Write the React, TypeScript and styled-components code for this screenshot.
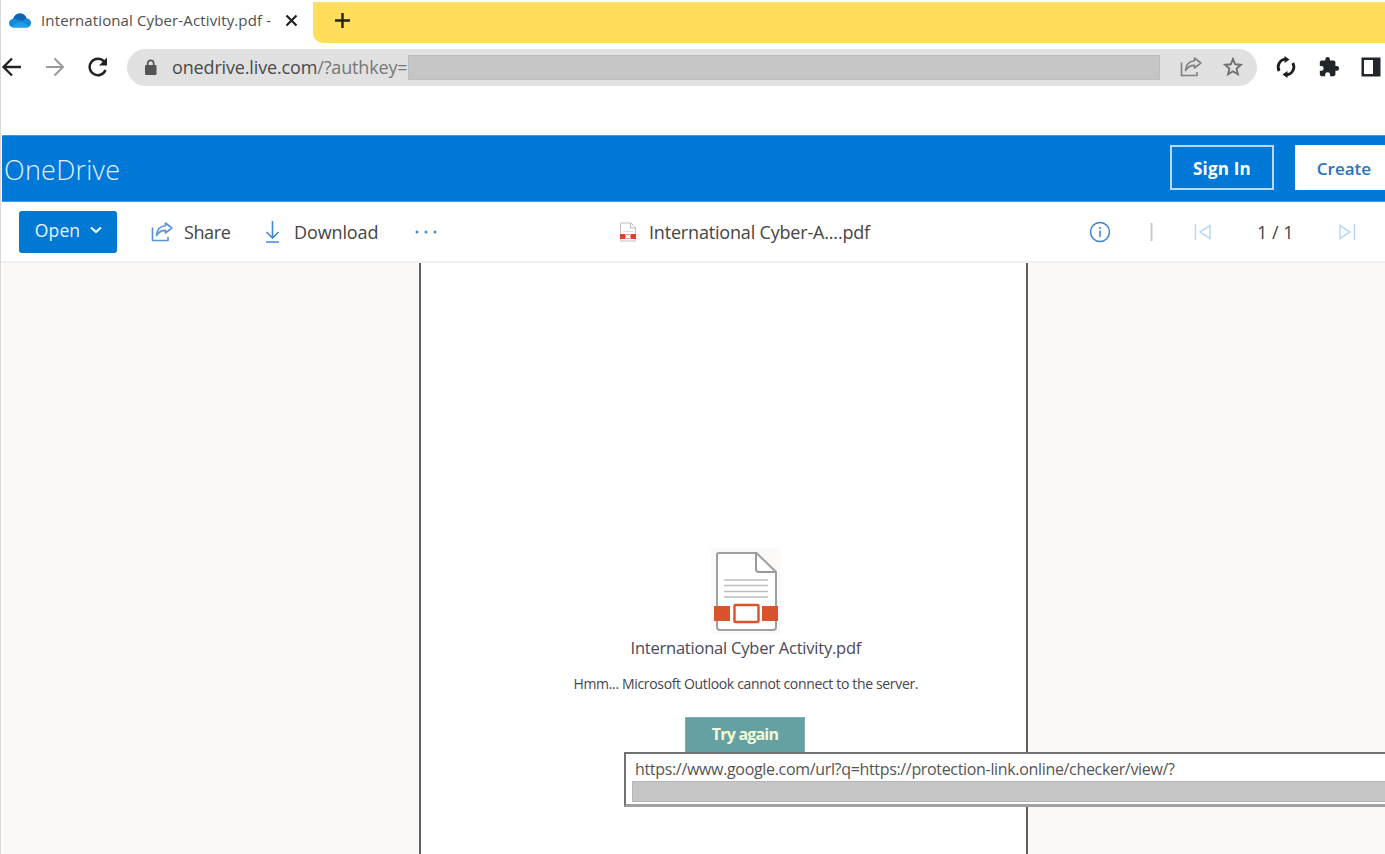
import React from "react";
import styled, { createGlobalStyle } from "styled-components";

const Global = createGlobalStyle`
  * { box-sizing: border-box; }
  html, body { margin: 0; padding: 0; overflow: hidden; }
  body { font-family: "Open Sans", "Noto Sans", sans-serif; background: #fff; }
  svg { display: block; flex: none; }
  button { font-family: inherit; margin: 0; padding: 0; cursor: pointer; }
`;

const Window = styled.div`
  width: 1385px;
  height: 854px;
  display: flex;
  flex-direction: column;
  overflow: hidden;
  background: #fff;
  border-left: 1px solid #d9d9d9;
`;

const Label = styled.span<{ $w: number; $size: number; $track?: number; $color?: string; $weight?: number }>`
  flex: none;
  width: ${(p) => p.$w}px;
  font-size: ${(p) => p.$size}px;
  letter-spacing: ${(p) => p.$track ?? 0}px;
  color: ${(p) => p.$color ?? "#444"};
  font-weight: ${(p) => p.$weight ?? 400};
  line-height: 24px;
  white-space: nowrap;
`;

const TabStrip = styled.div`
  display: flex;
  height: 43px;
  flex: none;
  padding-top: 2px;
`;

const Tab = styled.div`
  width: 312px;
  height: 41px;
  display: flex;
  align-items: center;
  padding: 0 0 5px 8px;
`;

const TabTitle = styled(Label)`
  margin-left: 10px;
`;

const TabClose = styled.div`
  margin-left: 13px;
`;

const StripRest = styled.div`
  flex: 1;
  height: 41px;
  background: #ffde5c;
  border-bottom-left-radius: 10px;
  border-top: 1px solid #ffe37a;
  display: flex;
  align-items: center;
  padding: 0 0 5px 21px;
`;

const NavBar = styled.div`
  display: flex;
  align-items: center;
  height: 48px;
  flex: none;
`;

const NavButtons = styled.div`
  display: flex;
  align-items: center;
  width: 126px;
  gap: 22px;
`;

const AddressBar = styled.div`
  width: 1130px;
  height: 37px;
  border-radius: 19px;
  background: #e1e1e1;
  display: flex;
  align-items: center;
  padding-left: 17px;
`;

const UrlText = styled(Label)`
  margin-left: 15px;
  span { color: #777; }
`;

const UrlMask = styled.div`
  width: 752px;
  height: 25px;
  background: #c6c6c6;
  border: 1px solid #bdbdbd;
`;

const AddressIcons = styled.div`
  display: flex;
  align-items: center;
  gap: 21px;
  margin-left: 20px;
`;

const Extensions = styled.div`
  display: flex;
  align-items: center;
  gap: 21px;
  margin-left: 18px;
`;

const Header = styled.header`
  margin: 44px 0 0 1px;
  height: 67px;
  flex: none;
  background: #0078d7;
  border-top: 1px solid #4798df;
  border-bottom: 1px solid #4798df;
  display: flex;
  align-items: center;
  padding: 0 0 2px 2px;
`;

const Brand = styled(Label)`
  line-height: 36px;
  padding-top: 4px;
`;

const HeaderActions = styled.div`
  display: flex;
  gap: 21px;
  margin-left: auto;
  margin-right: -21px;
`;

const HeaderButton = styled.button<{ $solid?: boolean }>`
  width: ${(p) => (p.$solid ? 111 : 104)}px;
  height: 45px;
  display: flex;
  align-items: center;
  padding: 2px 0 0 ${(p) => (p.$solid ? 19 : 20)}px;
  border: 2px solid ${(p) => (p.$solid ? "#fff" : "#b9daf5")};
  background: ${(p) => (p.$solid ? "#fff" : "transparent")};
`;

const CommandBar = styled.div`
  height: 61px;
  flex: none;
  display: flex;
  align-items: center;
  padding-left: 18px;
  border-bottom: 2px solid #f1f0ef;
`;

const OpenButton = styled.button`
  width: 98px;
  height: 42px;
  border: 0;
  border-radius: 3px;
  background: #0078d4;
  display: flex;
  align-items: center;
  gap: 9px;
  padding: 0 0 3px 15px;
`;

const Command = styled.div<{ $left: number; $gap: number }>`
  display: flex;
  align-items: center;
  margin-left: ${(p) => p.$left}px;
  gap: ${(p) => p.$gap}px;
`;

const Viewer = styled.main`
  flex: 1;
  display: flex;
  margin-left: 1px;
  background: #faf9f8;
  position: relative;
`;

const Page = styled.section`
  margin-left: 417px;
  width: 609px;
  background: #fff;
  border: solid #606060;
  border-width: 0 2px;
  padding: 285px 0 0 45px;
  display: flex;
  flex-direction: column;
  align-items: center;
`;

const IconPlate = styled.div`
  width: 70px;
  height: 86px;
  background: #fbfaf8;
  padding: 4px 0 0 3px;
`;

const FileName = styled(Label)`
  margin-top: 2px;
`;

const Message = styled(Label)`
  margin-top: 12px;
`;

const Retry = styled.button`
  margin: 21px 2px 0 0;
  width: 120px;
  height: 37px;
  border: 1px solid #7fb0ae;
  background: #65a1a3;
  display: flex;
  justify-content: center;
  padding-top: 4px;
`;

const LinkTip = styled.div`
  position: absolute;
  left: 622px;
  top: 489px;
  width: 800px;
  height: 55px;
  background: #fff;
  border: 2px solid #727272;
  border-bottom: 3px solid #a0a0a0;
  padding: 3px 0 0 6px;
  display: flex;
  flex-direction: column;
`;

const TipText = styled(Label)`
  margin-left: 3px;
`;

const TipMask = styled.div`
  height: 21px;
  flex: none;
  background: #c6c6c6;
  border: 1px solid #b5b5b5;
`;

const Cloud = () => (
  <svg width="22" height="15" viewBox="0 0 22 15">
    <path d="M5 14.500C2 14.500 0 12.600 0 10.200 0 7.800 1.800 6 4.200 5.800 5.300 2.400 8 .5 11 .5c3 0 5.500 1.800 6.500 4.800C20.200 5.500 22 7.500 22 10c0 2.600-1.900 4.500-4.500 4.500Z" fill="#1689d8" />
    <path d="M4.200 5.800C5.300 2.400 8 .5 11 .5c3 0 5.500 1.800 6.500 4.800L13 8 7 6Z" fill="#0f66b8" />
    <path d="M2 13.500 12 8.500l8.500 4.500c-.8 1-1.800 1.500-3 1.500H5c-1.200 0-2.200-.4-3-1Z" fill="#1fa0e8" />
  </svg>
);

const ShareIcon = ({ color }: { color: string }) => (
  <svg width="22" height="22" viewBox="0 0 22 22" fill="none" stroke={color} strokeWidth="1.600" strokeLinejoin="round">
    <path d="M1.500 6.500v13h15.500V16" />
    <path d="M14.500 2 20.800 7 14.500 12V9.400C10.500 9.200 7.800 11 5.500 14.500 6 9 9 5.200 14.500 4.800Z" />
  </svg>
);

const SmallPdf = () => (
  <svg width="18" height="20" viewBox="0 0 18 20">
    <path d="M1.500 1h10.500L16.500 5.500V19h-15Z" fill="#fff" stroke="#c2c2c2" />
    <path d="M11.500 1v5h5" fill="none" stroke="#b5b5b5" />
    <path d="M4 9.500h10" stroke="#ddd" />
    <path d="M1 12h5v5H1ZM12 12h5v5h-5Z" fill="#d9442d" />
    <path d="M6.500 12.500h5v4h-5Z" fill="#fff" stroke="#e99b8c" />
  </svg>
);

const LargePdf = () => (
  <svg width="66" height="80" viewBox="0 0 66 80" fill="none">
    <path d="M5 1H42.500L62 20V75q0 3-3 3H6q-3 0-3-3V3q0-2 2-2Z" fill="#fff" stroke="#a0a0a0" strokeWidth="2" />
    <path d="M42 1V17q0 3 3 3H62" stroke="#999" strokeWidth="2" />
    <path d="M10 28H54M10 33.500H54M10 39.500H54M10 45H54" stroke="#bdbdbd" strokeWidth="1.500" />
    <path d="M0 54H16V69H0ZM48 54H64V69H48Z" fill="#d9532c" />
    <rect x="17" y="51" width="30" height="21" fill="#fff" />
    <rect x="20.500" y="53" width="24" height="17" rx="1" fill="#fff" stroke="#d9532c" strokeWidth="2.400" />
  </svg>
);

export default function App() {
  return (
    <>
      <Global />
      <Window>
        <TabStrip>
          <Tab>
            <Cloud />
            <TabTitle $w={231} $size={15} $track={0.13} $color="#505050">International Cyber-Activity.pdf -</TabTitle>
            <TabClose>
              <svg width="13" height="13" viewBox="0 0 13 13" stroke="#222" strokeWidth="2.200"><path d="M1.500 1.500l10 10M11.500 1.500l-10 10" /></svg>
            </TabClose>
          </Tab>
          <StripRest>
            <svg width="17" height="17" viewBox="0 0 17 17" stroke="#26221a" strokeWidth="2.400"><path d="M8.500 1v15M1 8.500h15" /></svg>
          </StripRest>
        </TabStrip>

        <NavBar>
          <NavButtons>
            <svg width="21" height="20" viewBox="0 0 21 20" fill="none" stroke="#222" strokeWidth="2.300"><path d="M20 10H3M11 1.500 2.500 10 11 18.500" /></svg>
            <svg width="21" height="20" viewBox="0 0 21 20" fill="none" stroke="#999" strokeWidth="2"><path d="M2 10h16M10.500 1.500 19 10l-8.500 8.500" /></svg>
            <svg width="22" height="20" viewBox="0 0 22 20" fill="none"><path d="M17 4.500A8.200 8.200 0 1 0 18.500 13" stroke="#222" strokeWidth="2.500" /><path d="M20 .5V8.500H12Z" fill="#222" /></svg>
          </NavButtons>
          <AddressBar>
            <svg width="13" height="17" viewBox="0 0 13 17"><rect x="1" y="6" width="11.500" height="10" rx="1" fill="#555" /><path d="M3.700 7V4.300a3 3 0 0 1 6 0V7" fill="none" stroke="#555" strokeWidth="1.700" /></svg>
            <UrlText $w={236} $size={18} $track={-0.15} $color="#4a4a4a">onedrive.live.com<span>/?authkey=</span></UrlText>
            <UrlMask />
            <AddressIcons>
              <ShareIcon color="#808080" />
              <svg width="20" height="20" viewBox="0 0 20 20" fill="none" stroke="#707070" strokeWidth="1.900"><path d="M10 2l2.200 5.300 5.800.5-4.400 3.800 1.300 5.700L10 14.300l-4.900 3 1.300-5.700L2 7.800l5.800-.5Z" /></svg>
            </AddressIcons>
          </AddressBar>
          <Extensions>
            <svg width="22" height="22" viewBox="0 0 22 22" fill="none" stroke="#1d1d1f" strokeWidth="2.800">
              <path d="M4.200 15A7.900 7.900 0 0 1 10.500 3.200" /><path d="M17.800 7a7.900 7.900 0 0 1-6.300 11.800" />
              <path d="M9.500 0 14.500 3.500 9.500 7ZM12.500 22l-5-3.500 5-3.500Z" fill="#1d1d1f" stroke="none" />
            </svg>
            <svg width="22" height="22" viewBox="0 0 24 24" fill="#222529"><path d="M20.500 11H19V7c0-1.100-.9-2-2-2h-4V3.500a2.500 2.500 0 0 0-5 0V5H4c-1.100 0-2 .9-2 2v3.800h1.500a2.700 2.700 0 0 1 0 5.400H2V20c0 1.100.9 2 2 2h3.800v-1.500a2.700 2.700 0 0 1 5.400 0V22H17c1.100 0 2-.9 2-2v-4h1.500a2.500 2.500 0 0 0 0-5Z" /></svg>
            <svg width="20" height="20" viewBox="0 0 20 20"><path d="M.5.5h19v19H.5Z" fill="#222529" /><path d="M3 3h9v14H3Z" fill="#fff" /></svg>
          </Extensions>
        </NavBar>

        <Header>
          <Brand $w={120} $size={27} $track={0.25} $color="#e2f1ff" $weight={300}>OneDrive</Brand>
          <HeaderActions>
            <HeaderButton><Label $w={60} $size={17} $track={0.2} $color="#fff" $weight={700}>Sign In</Label></HeaderButton>
            <HeaderButton $solid><Label $w={56} $size={17} $color="#2574bf" $weight={600}>Create</Label></HeaderButton>
          </HeaderActions>
        </Header>

        <CommandBar>
          <OpenButton>
            <Label $w={47} $size={17.5} $track={0.1} $color="#e9f5ff" $weight={500}>Open</Label>
            <svg width="12" height="8" viewBox="0 0 12 8" fill="none" stroke="#e9f5ff" strokeWidth="2.200"><path d="M1 1.500l5 4.500 5-4.500" /></svg>
          </OpenButton>
          <Command $left={34} $gap={11}>
            <ShareIcon color="#5b93d8" />
            <Label $w={48} $size={18} $track={-0.4}>Share</Label>
          </Command>
          <Command $left={32} $gap={13}>
            <svg width="17" height="22" viewBox="0 0 17 22" fill="none" stroke="#4689d3" strokeWidth="1.600"><path d="M8.500 0v17M2.500 11l6 6 6-6M2 21h13" /></svg>
            <Label $w={86} $size={18} $track={-0.12}>Download</Label>
          </Command>
          <Command $left={35} $gap={0}>
            <svg width="22" height="4" viewBox="0 0 22 4" fill="#4689d3"><circle cx="2" cy="2" r="1.500" /><circle cx="11" cy="2" r="1.500" /><circle cx="20" cy="2" r="1.500" /></svg>
          </Command>
          <Command $left={182} $gap={12}>
            <SmallPdf />
            <Label $w={222} $size={18} $track={-0.18}>International Cyber-A....pdf</Label>
          </Command>
          <Command $left={218} $gap={0}>
            <svg width="22" height="22" viewBox="0 0 22 22" fill="none" stroke="#3d82cf" strokeWidth="1.500"><circle cx="11" cy="11" r="9.500" /><path d="M11 9.500V16M11 6v2" /></svg>
          </Command>
          <Command $left={39} $gap={0}>
            <svg width="3" height="20" viewBox="0 0 3 20"><path d="M1.500 1v18" stroke="#c9c7cc" strokeWidth="2" /></svg>
          </Command>
          <Command $left={41} $gap={45}>
            <svg width="18" height="16" viewBox="0 0 18 16" fill="none" stroke="#b8daf3" strokeWidth="1.500"><path d="M1.500 0v16M16 1.500v13L6 8Z" /></svg>
            <Label $w={36} $size={18}>1 / 1</Label>
            <svg width="18" height="16" viewBox="0 0 18 16" fill="none" stroke="#b8daf3" strokeWidth="1.500"><path d="M16.500 0v16M2 1.500v13L12 8Z" /></svg>
          </Command>
        </CommandBar>

        <Viewer>
          <Page>
            <IconPlate><LargePdf /></IconPlate>
            <FileName $w={231} $size={16.5} $track={-0.22} $color="#484858">International Cyber Activity.pdf</FileName>
            <Message $w={345} $size={14} $track={-0.34} $color="#45454f">Hmm... Microsoft Outlook cannot connect to the server.</Message>
            <Retry><Label $w={68} $size={16} $track={-0.8} $color="#f2fbd5" $weight={700}>Try again</Label></Retry>
          </Page>
          <LinkTip>
            <TipText $w={540} $size={16} $track={-0.33} $color="#555">https://www.google.com/url?q=https://protection-link.online/checker/view/?</TipText>
            <TipMask />
          </LinkTip>
        </Viewer>
      </Window>
    </>
  );
}
